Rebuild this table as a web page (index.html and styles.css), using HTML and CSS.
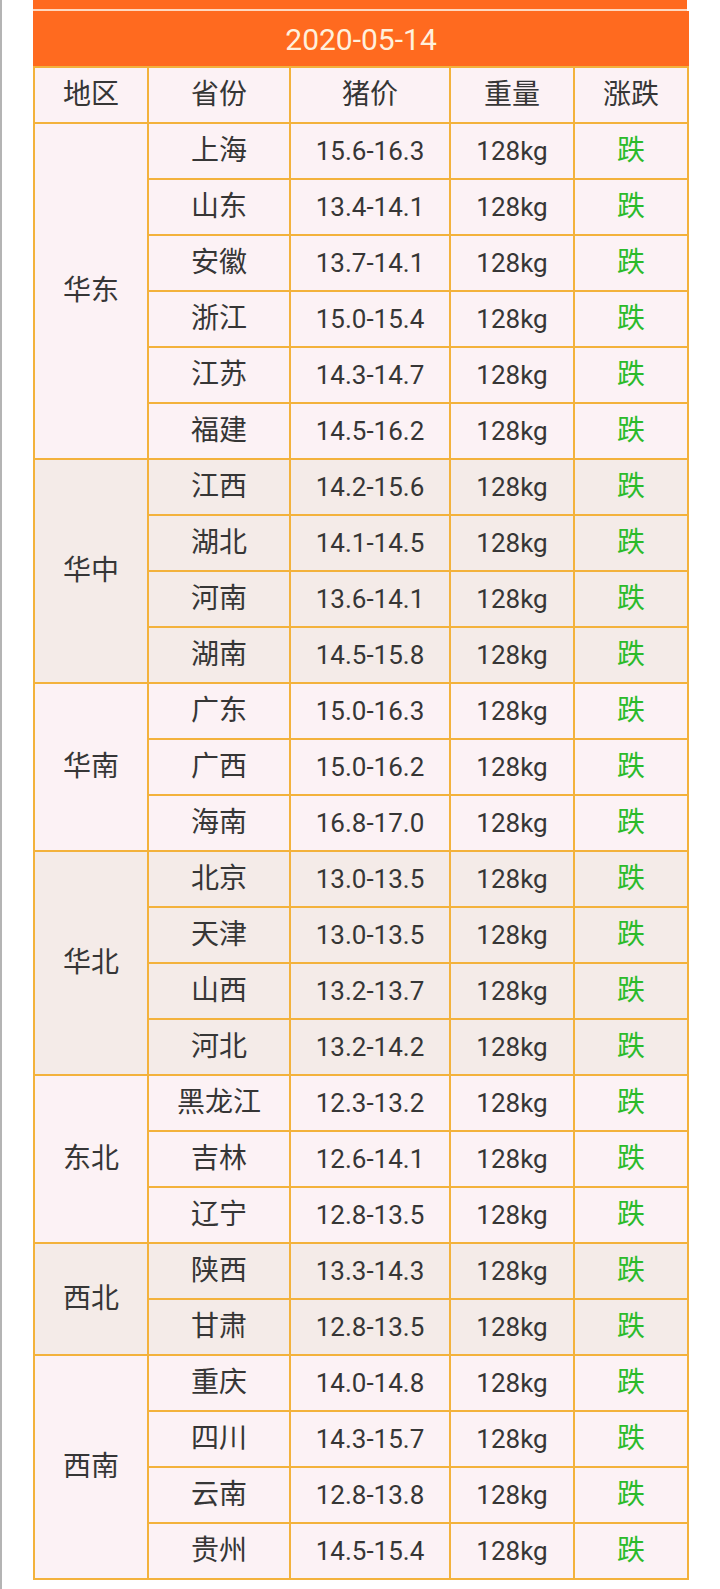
FILE: index.html
```html
<!DOCTYPE html>
<html lang="zh-CN">
<head>
<meta charset="utf-8">
<title>猪价 2020-05-14</title>
<link rel="stylesheet" href="styles.css">
</head>
<body>
<div class="page">
  <div class="sheet">
    <div class="topbar"></div>
    <table class="prices">
      <colgroup>
        <col class="c-region"><col class="c-prov"><col class="c-price"><col class="c-weight"><col class="c-trend">
      </colgroup>
      <thead>
        <tr><th class="title" colspan="5">2020-05-14</th></tr>
        <tr class="head"><th>地区</th><th>省份</th><th>猪价</th><th>重量</th><th>涨跌</th></tr>
      </thead>
      <tbody class="odd">
        <tr><td class="region" rowspan="6">华东</td><td>上海</td><td class="num">15.6-16.3</td><td class="num">128kg</td><td class="down">跌</td></tr>
        <tr><td>山东</td><td class="num">13.4-14.1</td><td class="num">128kg</td><td class="down">跌</td></tr>
        <tr><td>安徽</td><td class="num">13.7-14.1</td><td class="num">128kg</td><td class="down">跌</td></tr>
        <tr><td>浙江</td><td class="num">15.0-15.4</td><td class="num">128kg</td><td class="down">跌</td></tr>
        <tr><td>江苏</td><td class="num">14.3-14.7</td><td class="num">128kg</td><td class="down">跌</td></tr>
        <tr><td>福建</td><td class="num">14.5-16.2</td><td class="num">128kg</td><td class="down">跌</td></tr>
      </tbody>
      <tbody class="even">
        <tr><td class="region" rowspan="4">华中</td><td>江西</td><td class="num">14.2-15.6</td><td class="num">128kg</td><td class="down">跌</td></tr>
        <tr><td>湖北</td><td class="num">14.1-14.5</td><td class="num">128kg</td><td class="down">跌</td></tr>
        <tr><td>河南</td><td class="num">13.6-14.1</td><td class="num">128kg</td><td class="down">跌</td></tr>
        <tr><td>湖南</td><td class="num">14.5-15.8</td><td class="num">128kg</td><td class="down">跌</td></tr>
      </tbody>
      <tbody class="odd">
        <tr><td class="region" rowspan="3">华南</td><td>广东</td><td class="num">15.0-16.3</td><td class="num">128kg</td><td class="down">跌</td></tr>
        <tr><td>广西</td><td class="num">15.0-16.2</td><td class="num">128kg</td><td class="down">跌</td></tr>
        <tr><td>海南</td><td class="num">16.8-17.0</td><td class="num">128kg</td><td class="down">跌</td></tr>
      </tbody>
      <tbody class="even">
        <tr><td class="region" rowspan="4">华北</td><td>北京</td><td class="num">13.0-13.5</td><td class="num">128kg</td><td class="down">跌</td></tr>
        <tr><td>天津</td><td class="num">13.0-13.5</td><td class="num">128kg</td><td class="down">跌</td></tr>
        <tr><td>山西</td><td class="num">13.2-13.7</td><td class="num">128kg</td><td class="down">跌</td></tr>
        <tr><td>河北</td><td class="num">13.2-14.2</td><td class="num">128kg</td><td class="down">跌</td></tr>
      </tbody>
      <tbody class="odd">
        <tr><td class="region" rowspan="3">东北</td><td>黑龙江</td><td class="num">12.3-13.2</td><td class="num">128kg</td><td class="down">跌</td></tr>
        <tr><td>吉林</td><td class="num">12.6-14.1</td><td class="num">128kg</td><td class="down">跌</td></tr>
        <tr><td>辽宁</td><td class="num">12.8-13.5</td><td class="num">128kg</td><td class="down">跌</td></tr>
      </tbody>
      <tbody class="even">
        <tr><td class="region" rowspan="2">西北</td><td>陕西</td><td class="num">13.3-14.3</td><td class="num">128kg</td><td class="down">跌</td></tr>
        <tr><td>甘肃</td><td class="num">12.8-13.5</td><td class="num">128kg</td><td class="down">跌</td></tr>
      </tbody>
      <tbody class="odd">
        <tr><td class="region" rowspan="4">西南</td><td>重庆</td><td class="num">14.0-14.8</td><td class="num">128kg</td><td class="down">跌</td></tr>
        <tr><td>四川</td><td class="num">14.3-15.7</td><td class="num">128kg</td><td class="down">跌</td></tr>
        <tr><td>云南</td><td class="num">12.8-13.8</td><td class="num">128kg</td><td class="down">跌</td></tr>
        <tr><td>贵州</td><td class="num">14.5-15.4</td><td class="num">128kg</td><td class="down">跌</td></tr>
      </tbody>
    </table>
  </div>
</div>
</body>
</html>
```

FILE: styles.css
```css
html, body {
  margin: 0;
  padding: 0;
  background: #ffffff;
}

.page {
  min-height: 1589px;
  border-left: 2px solid #b4b4b4;
  box-sizing: border-box;
  padding-left: 31px;
  font-family: Roboto, "Noto Sans CJK SC", sans-serif;
  color: #363636;
}

.sheet {
  width: 654px;
}

.topbar {
  height: 9px;
  background: #ff6a1f;
  border-bottom: 2px solid #ffd8bf;
}

.prices {
  width: 654px;
  table-layout: fixed;
  border-collapse: collapse;
  border: 2px solid #f3b23c;
}

.c-region { width: 114px; }
.c-prov { width: 142px; }
.c-price { width: 160px; }
.c-weight { width: 124px; }
.c-trend { width: 114px; }

.prices th,
.prices td {
  border: 2px solid #f3b23c;
  height: 54px;
  padding: 0;
  text-align: center;
  vertical-align: middle;
  font-size: 28px;
  font-weight: normal;
  line-height: 1;
  overflow: hidden;
}

.prices td.num {
  font-size: 26px;
}

.prices th.title {
  height: 53px;
  background: #ff6a1f;
  color: #fff0dc;
  font-size: 30px;
  border-color: #ff6a1f;
  border-bottom-color: #f3b23c;
}

.head th {
  background: #fcf2f5;
  color: #363636;
}

.odd td {
  background: #fcf2f5;
}

.even td {
  background: #f4ebe8;
}

.down {
  color: #2bbb2b;
}
```
